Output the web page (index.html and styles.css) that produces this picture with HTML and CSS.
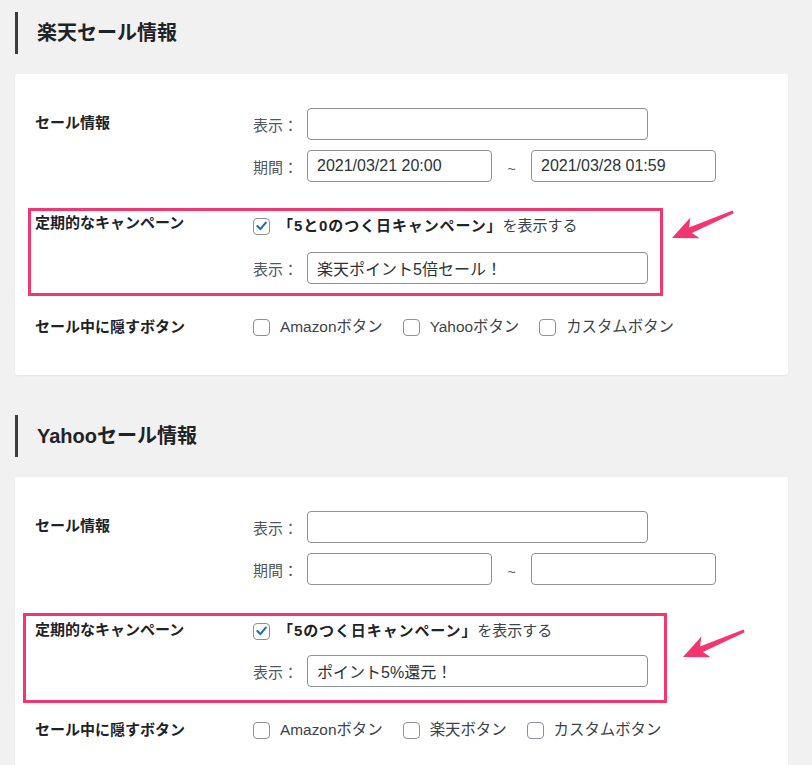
FILE: index.html
```html
<!DOCTYPE html>
<html lang="ja">
<head>
<meta charset="utf-8">
<title>セール情報</title>
<link rel="stylesheet" href="styles.css">
</head>
<body>
<div class="page">
  <h2 class="section-title">楽天セール情報</h2>
  <div class="card card-rakuten">
    <div class="row row-sale">
      <div class="row-label">セール情報</div>
      <div class="fields">
        <div class="field-line"><span class="field-name">表示：</span><input class="input input-wide" type="text" value="" readonly></div>
        <div class="field-line"><span class="field-name">期間：</span><input class="input input-date" type="text" value="2021/03/21 20:00" readonly><span class="tilde">~</span><input class="input input-date" type="text" value="2021/03/28 01:59" readonly></div>
      </div>
    </div>
    <div class="row highlight highlight-1">
      <div class="row-label">定期的なキャンペーン</div>
      <div class="campaign-values">
        <div class="check-line"><span class="checkbox checked"><svg viewBox="0 0 16 16" width="16" height="16"><path d="M3.6 8.1 L6.8 11.3 L12.6 4.4" fill="none" stroke="#2271b1" stroke-width="2.3" stroke-linecap="round" stroke-linejoin="round"/></svg></span><span><strong class="em">「5と0のつく日キャンペーン」</strong>を表示する</span></div>
        <div class="field-line"><span class="field-name">表示：</span><input class="input input-wide" type="text" value="楽天ポイント5倍セール！" readonly></div>
      </div>
    </div>
    <div class="row row-hide">
      <div class="row-label">セール中に隠すボタン</div>
      <div class="options">
        <span class="option"><span class="checkbox"></span>Amazonボタン</span>
        <span class="option"><span class="checkbox"></span>Yahooボタン</span>
        <span class="option"><span class="checkbox"></span>カスタムボタン</span>
      </div>
    </div>
    <svg class="arrow arrow-1" viewBox="0 0 64 32" width="64" height="32"><polygon points="0,28 27.6,28.2 19.9,23 61.8,3.2 60.6,0.6 17,17.4 18.4,7.4" fill="#f3366f"/></svg>
  </div>

  <h2 class="section-title">Yahooセール情報</h2>
  <div class="card card-yahoo">
    <div class="row row-sale">
      <div class="row-label">セール情報</div>
      <div class="fields">
        <div class="field-line"><span class="field-name">表示：</span><input class="input input-wide" type="text" value="" readonly></div>
        <div class="field-line"><span class="field-name">期間：</span><input class="input input-date" type="text" value="" readonly><span class="tilde">~</span><input class="input input-date" type="text" value="" readonly></div>
      </div>
    </div>
    <div class="row highlight highlight-2">
      <div class="row-label">定期的なキャンペーン</div>
      <div class="campaign-values">
        <div class="check-line"><span class="checkbox checked"><svg viewBox="0 0 16 16" width="16" height="16"><path d="M3.6 8.1 L6.8 11.3 L12.6 4.4" fill="none" stroke="#2271b1" stroke-width="2.3" stroke-linecap="round" stroke-linejoin="round"/></svg></span><span><strong class="em">「5のつく日キャンペーン」</strong>を表示する</span></div>
        <div class="field-line"><span class="field-name">表示：</span><input class="input input-wide" type="text" value="ポイント5%還元！" readonly></div>
      </div>
    </div>
    <div class="row row-hide">
      <div class="row-label">セール中に隠すボタン</div>
      <div class="options">
        <span class="option"><span class="checkbox"></span>Amazonボタン</span>
        <span class="option"><span class="checkbox"></span>楽天ボタン</span>
        <span class="option"><span class="checkbox"></span>カスタムボタン</span>
      </div>
    </div>
    <svg class="arrow arrow-2" viewBox="0 0 64 32" width="64" height="32"><polygon points="0,28 27.6,28.2 19.9,23 61.8,3.2 60.6,0.6 17,17.4 18.4,7.4" fill="#f3366f"/></svg>
  </div>
</div>
</body>
</html>
```

FILE: styles.css
```css
html, body {
  margin: 0;
  background: #f1f1f1;
}
body {
  font-family: "Liberation Sans", "Noto Sans CJK JP", sans-serif;
  font-size: 15px;
  color: #3c434a;
}
.page {
  padding: 12px 24px 0 15px;
}
.section-title {
  margin: 0;
  height: 42px;
  line-height: 42px;
  border-left: 3px solid #3a3d40;
  padding-left: 19px;
  font-size: 20px;
  font-weight: 700;
  color: #1d2327;
}
.card {
  position: relative;
  margin-top: 20px;
  background: #fff;
  padding: 34px 20px 36px;
  border-radius: 3px;
  box-shadow: 0 1px 2px rgba(0, 0, 0, 0.05);
}
.card + .section-title {
  margin-top: 40px;
}
.row {
  display: flex;
  align-items: flex-start;
}
.row-label {
  width: 218px;
  flex: none;
  font-weight: 700;
  color: #1d2327;
  line-height: 24px;
}
.row-sale .row-label {
  padding-top: 3px;
}
.fields {
  display: flex;
  flex-direction: column;
  gap: 10px;
}
.field-line {
  display: flex;
  align-items: center;
}
.field-name {
  width: 54px;
  flex: none;
  color: #50575e;
}
.input {
  height: 32px;
  box-sizing: border-box;
  border: 1px solid #8c8f94;
  border-radius: 4px;
  padding: 0 9px;
  margin: 0;
  font-family: inherit;
  font-size: 16px;
  color: #2c3338;
  background: #fff;
  outline: none;
}
.input-wide {
  width: 341px;
}
.input-date {
  width: 185px;
}
.tilde {
  width: 39px;
  padding-top: 6px;
  text-align: center;
  color: #50575e;
  font-size: 14px;
}
.highlight {
  box-sizing: border-box;
  border: 3px solid #f3366f;
  margin-top: 26px;
}
.highlight-1 {
  width: 635px;
  margin-left: -7px;
  padding: 0 0 9px 4px;
}
.highlight-2 {
  width: 644px;
  margin-left: -12px;
  margin-top: 28px;
  padding: 2px 0 13px 9px;
}
.campaign-values {
  display: flex;
  flex-direction: column;
}
.highlight-1 .campaign-values {
  padding-top: 3px;
}
.highlight-1 .campaign-values .field-line {
  margin-top: 14px;
}
.highlight-2 .campaign-values {
  padding-top: 1px;
}
.highlight-2 .campaign-values .field-line {
  margin-top: 12px;
}
.check-line {
  display: flex;
  align-items: center;
  line-height: 24px;
}
.check-line .checkbox {
  margin-right: 8px;
}
.em {
  font-weight: 700;
  color: #1d2327;
  letter-spacing: 0.9px;
}
.checkbox {
  width: 17px;
  height: 17px;
  flex: none;
  box-sizing: border-box;
  border: 1px solid #8c8f94;
  border-radius: 4px;
  background: #fff;
  margin-right: 10px;
  display: inline-flex;
  align-items: center;
  justify-content: center;
}
.row-hide {
  margin-top: 19px;
}
.card-yahoo .row-hide {
  margin-top: 15px;
}
.options {
  display: flex;
  align-items: center;
  gap: 20px;
  line-height: 24px;
  font-size: 15.4px;
}
.option {
  display: flex;
  align-items: center;
}
.arrow {
  position: absolute;
}
.arrow-1 {
  left: 657px;
  top: 136px;
}
.arrow-2 {
  left: 668px;
  top: 152px;
}
```
